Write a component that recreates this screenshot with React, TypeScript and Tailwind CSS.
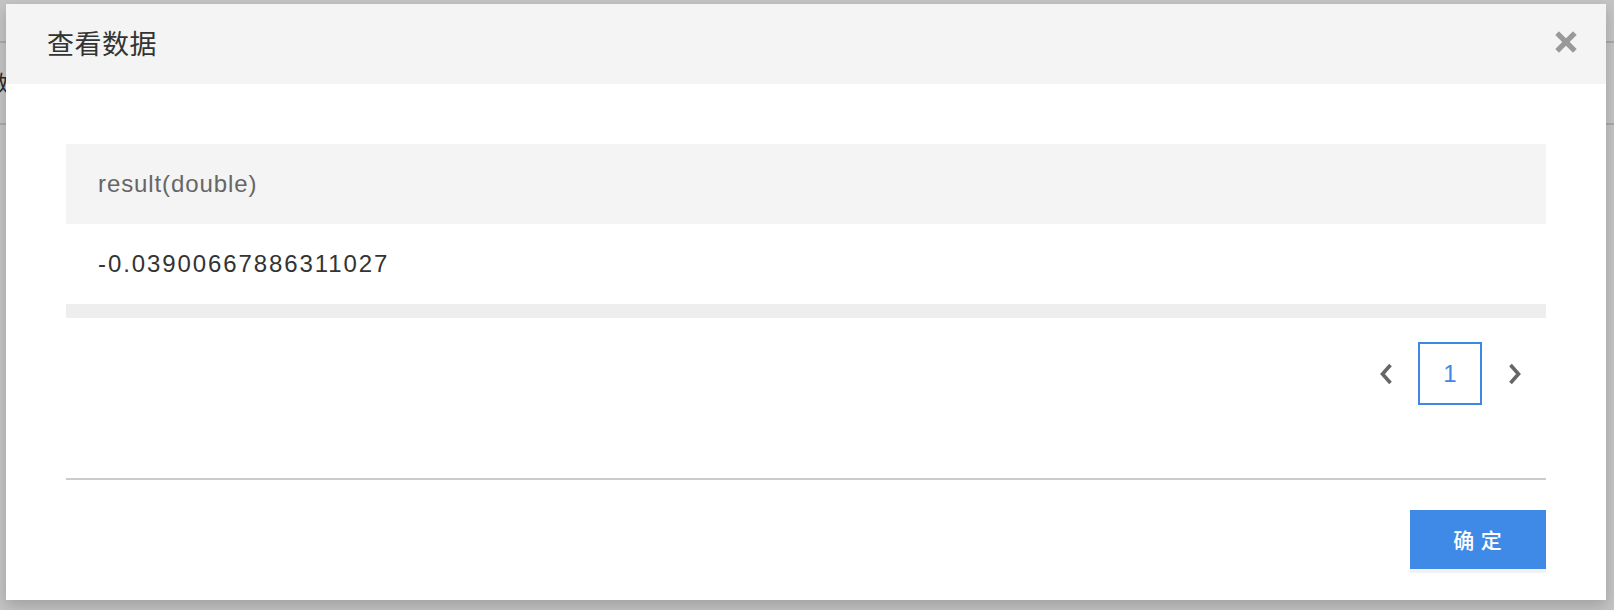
import { X } from 'lucide-react';

const rows = ['-0.03900667886311027'];

function Chevron({ dir }: { dir: 'left' | 'right' }) {
    return (
        <svg width="16" height="22" viewBox="0 0 16 22" fill="none" stroke="currentColor" strokeWidth="3.6" strokeLinejoin="miter">
            {dir === 'left' ? <path d="M12.5 2 L4.5 11 L12.5 20" /> : <path d="M3.5 2 L11.5 11 L3.5 20" />}
        </svg>
    );
}

export default function App() {
    return (
        <div className="relative w-[1614px] h-[610px] overflow-hidden bg-white font-['Liberation_Sans','Noto_Sans_CJK_SC',sans-serif]">
            {/* page behind the dialog */}
            <div className="h-[43px] border-b-2 border-[#dcdcdc]" />
            <div className="h-[82px] border-b-2 border-[#dcdcdc] flex items-center">
                <span className="-ml-[13px] text-[22px] text-[#333]">数</span>
            </div>

            <div className="absolute inset-0 bg-[rgba(0,0,0,0.23)]" />

            {/* dialog */}
            <div className="absolute left-[6px] top-[4px] w-[1600px] h-[596px] bg-white flex flex-col shadow-[0_6px_14px_rgba(0,0,0,0.18)]">
                <div className="h-[80px] bg-[#f4f4f4] flex items-center justify-between pl-[41px] pr-[26px]">
                    <h2 className="text-[27px] tracking-[0.5px] text-[#333] font-['Noto_Sans_CJK_SC',sans-serif] -mt-[2px]">查看数据</h2>
                    <button className="text-[#999] -mt-[4px]">
                        <X size={28} strokeWidth={4.5} strokeLinecap="square" />
                    </button>
                </div>

                <div className="px-[60px] pt-[60px] flex-1 flex flex-col">
                    {/* table */}
                    <div>
                        <div className="h-[80px] bg-[#f4f4f4] flex items-center pl-[32px] text-[24px] tracking-[0.9px] text-[#666]">
                            result(double)
                        </div>
                        {rows.map((r) => (
                            <div key={r} className="h-[80px] flex items-center pl-[32px] text-[24px] tracking-[1.9px] text-[#333]">
                                {r}
                            </div>
                        ))}
                        <div className="h-[14px] bg-[#eeeeee]" />
                    </div>

                    {/* pagination */}
                    <div className="mt-[24px] flex justify-end items-center pr-[23px]">
                        <button className="text-[#666]">
                            <Chevron dir="left" />
                        </button>
                        <div className="ml-[24px] mr-[25px] w-[64px] h-[63px] border-2 border-[#3d88e5] flex items-center justify-center text-[24px] text-[#3d88e5]">
                            1
                        </div>
                        <button className="text-[#666]">
                            <Chevron dir="right" />
                        </button>
                    </div>

                    <div className="mt-[73px] h-[2px] bg-[#cccccc]" />

                    <div className="mt-[30px] flex justify-end">
                        <button className="w-[136px] h-[59px] bg-[#3f8ae6] text-white text-[21px] tracking-[1px] font-medium font-['Noto_Sans_CJK_SC',sans-serif] shadow-[0_4px_0_#f2f2f2]">
                            确 定
                        </button>
                    </div>
                </div>
            </div>
        </div>
    );
}
